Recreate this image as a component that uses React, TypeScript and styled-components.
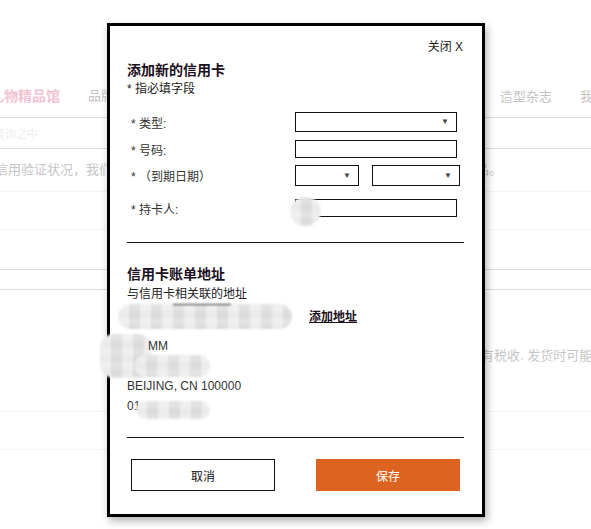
import React from "react";
import styled, { createGlobalStyle } from "styled-components";

const GlobalStyle = createGlobalStyle`
  html, body {
    margin: 0;
    padding: 0;
    background: #fff;
    overflow: hidden;
  }
  body {
    font-family: "Liberation Sans", "Noto Sans CJK SC", sans-serif;
  }
  * {
    box-sizing: border-box;
  }
`;

const navLeft = ["礼物精品馆", "品牌", "男士", "女士"];
const navRight = ["儿童", "造型杂志", "我的"];

const backdropRows = [
  { h: 31, line: "strong", text: "查询之中", pad: -6, muted: true },
  {
    h: 43,
    line: "faint",
    text: "信用验证状况，我们将无法处理您的订单，请更换其他付款方式后再次提交购买的商品。",
    pad: -5,
    top: -4,
  },
  { h: 38, line: "faint" },
  { h: 40, line: "strong" },
  { h: 20, line: "strong" },
  { h: 122, line: "faint", text: "有税收. 发货时可能需要额外的处理时间", pad: 481, top: 8 },
  { h: 38, line: "faint" },
] as const;

const addressLines = ["MM", "", "BEIJING, CN 100000", "01"];

export default function App() {
  return (
    <>
      <GlobalStyle />
      <Page>
        <Nav>
          <NavGroup>
            {navLeft.map((item, i) => (
              <NavItem key={item} $brand={i === 0}>
                {item}
              </NavItem>
            ))}
          </NavGroup>
          <NavGroup>
            {navRight.map((item) => (
              <NavItem key={item}>{item}</NavItem>
            ))}
          </NavGroup>
        </Nav>
        {backdropRows.map((row, i) => (
          <BgRow key={i} $h={row.h} $line={row.line}>
            {"text" in row && (
              <BgText
                $pad={row.pad}
                $shift={"top" in row ? row.top : 0}
                $muted={"muted" in row}
              >
                {row.text}
              </BgText>
            )}
          </BgRow>
        ))}

        <Modal>
          <CloseRow>关闭 X</CloseRow>
          <Title>添加新的信用卡</Title>
          <Note>* 指必填字段</Note>

          <Form>
            <FormRow $top={0}>
              <Label>* 类型:</Label>
              <SelectBox $w={162} $h={20}>
                <Arrow>▼</Arrow>
              </SelectBox>
            </FormRow>
            <FormRow $top={8}>
              <Label>* 号码:</Label>
              <TextBox $w={162} $h={18} />
            </FormRow>
            <FormRow $top={7}>
              <Label>* （到期日期）</Label>
              <DateFields>
                <SelectBox $w={64} $h={21}>
                  <Arrow>▼</Arrow>
                </SelectBox>
                <SelectBox $w={88} $h={21}>
                  <Arrow>▼</Arrow>
                </SelectBox>
              </DateFields>
            </FormRow>
            <FormRow $top={13}>
              <Label>* 持卡人:</Label>
              <FieldWrap>
                <TextBox $w={162} $h={18} />
                <Redact $x={-5} $y={-2} $w={31} $h={29} $round />
              </FieldWrap>
            </FormRow>
          </Form>

          <Divider $top={25} />

          <Title $top={22}>信用卡账单地址</Title>
          <SubNote>与信用卡相关联的地址</SubNote>

          <AddressRow>
            <AddressPick>
              <Redact $x={-9} $y={0} $w={174} $h={25} $edge />
            </AddressPick>
            <AddLink>添加地址</AddLink>
          </AddressRow>

          <AddressBlock>
            <Redact $x={-27} $y={-2} $w={52} $h={44} />
            <Redact $x={8} $y={19} $w={75} $h={22} />
            {addressLines.map((line, i) => (
              <AddressLine key={i} $indent={i === 0 ? 21 : 0}>
                {line || "\u00a0"}
              </AddressLine>
            ))}
            <Redact $x={9} $y={65} $w={74} $h={18} />
          </AddressBlock>

          <Divider $top={21} />

          <Buttons>
            <CancelButton>取消</CancelButton>
            <SaveButton>保存</SaveButton>
          </Buttons>
        </Modal>
      </Page>
    </>
  );
}

const Page = styled.div`
  position: relative;
  width: 591px;
  height: 529px;
  overflow: hidden;
  font-family: "Liberation Sans", "Noto Sans CJK SC", sans-serif;
`;

const Nav = styled.nav`
  display: flex;
  justify-content: space-between;
  align-items: flex-end;
  width: 616px;
  height: 118px;
  margin-left: -10px;
  padding-bottom: 12px;
  border-bottom: 1px solid #dcdcdc;
  font-size: 13px;
`;

const NavGroup = styled.div`
  display: flex;
  gap: 28px;
`;

const NavItem = styled.span<{ $brand?: boolean }>`
  white-space: nowrap;
  font-size: ${({ $brand }) => ($brand ? 14 : 13)}px;
  color: ${({ $brand }) => ($brand ? "#f2c3d4" : "#c4c4c4")};
  font-weight: ${({ $brand }) => ($brand ? 700 : 400)};
`;

const BgRow = styled.div<{ $h: number; $line: string }>`
  display: flex;
  align-items: center;
  height: ${({ $h }) => $h}px;
  border-bottom: 1px solid
    ${({ $line }) => ($line === "strong" ? "#dcdcdc" : "#f4f4f4")};
  overflow: hidden;
`;

const BgText = styled.span<{ $pad: number; $shift: number; $muted?: boolean }>`
  margin-left: ${({ $pad }) => $pad}px;
  margin-top: ${({ $shift }) => $shift}px;
  white-space: nowrap;
  font-size: ${({ $muted }) => ($muted ? 11 : 13)}px;
  color: ${({ $muted }) => ($muted ? "#eeeeee" : "#c6c6c6")};
`;

const Modal = styled.div`
  position: absolute;
  left: 107px;
  top: 23px;
  width: 378px;
  padding: 13px 18px 23px 17px;
  background: #fff;
  border: 3px solid #000;
  box-shadow: 2px 4px 8px rgba(0, 0, 0, 0.3);
  color: #222;
  font-family: "Liberation Sans", "Noto Sans CJK SC", sans-serif;
`;

const CloseRow = styled.div`
  text-align: right;
  font-size: 12px;
  line-height: 16px;
  color: #222;
  padding-right: 1px;
`;

const Title = styled.h2<{ $top?: number }>`
  margin: ${({ $top }) => $top ?? 6}px 0 0;
  font-size: 14px;
  line-height: 18px;
  font-weight: 700;
  color: #1c1020;
`;

const Note = styled.div`
  margin-top: 2px;
  font-size: 12px;
  line-height: 16px;
`;

const SubNote = styled(Note)`
  margin-top: 3px;
`;

const Form = styled.div`
  margin-top: 15px;
  padding-left: 4px;
`;

const FormRow = styled.div<{ $top: number }>`
  display: flex;
  align-items: center;
  margin-top: ${({ $top }) => $top}px;
`;

const Label = styled.div`
  width: 164px;
  font-size: 12px;
  color: #333;
`;

const SelectBox = styled.div<{ $w: number; $h: number }>`
  display: flex;
  align-items: center;
  justify-content: flex-end;
  width: ${({ $w }) => $w}px;
  height: ${({ $h }) => $h}px;
  padding-right: 7px;
  border: 1px solid #111;
  background: #fff;
`;

const Arrow = styled.span`
  font-size: 8px;
  line-height: 1;
  color: #444;
`;

const TextBox = styled.div<{ $w: number; $h: number }>`
  width: ${({ $w }) => $w}px;
  height: ${({ $h }) => $h}px;
  border: 1px solid #111;
  background: #fff;
`;

const DateFields = styled.div`
  display: flex;
  gap: 13px;
`;

const FieldWrap = styled.div`
  position: relative;
`;

const Redact = styled.div<{
  $x: number;
  $y: number;
  $w: number;
  $h: number;
  $round?: boolean;
  $edge?: boolean;
}>`
  position: absolute;
  left: ${({ $x }) => $x}px;
  top: ${({ $y }) => $y}px;
  width: ${({ $w }) => $w}px;
  height: ${({ $h }) => $h}px;
  border-radius: ${({ $round }) => ($round ? "50%" : "14px")};
  background-color: #e2e2e2;
  background-image: linear-gradient(
      90deg,
      rgba(255, 255, 255, 0.45) 50%,
      transparent 50%
    ),
    linear-gradient(0deg, rgba(0, 0, 0, 0.03) 50%, transparent 50%);
  background-size: 22px 100%, 100% 14px;
  filter: blur(1px);

  &::before {
    content: "";
    display: ${({ $edge }) => ($edge ? "block" : "none")};
    position: absolute;
    left: 55px;
    top: 0;
    width: 58px;
    height: 1px;
    background: #222;
  }
`;

const Divider = styled.div<{ $top: number }>`
  height: 1px;
  margin-top: ${({ $top }) => $top}px;
  background: #111;
`;

const AddressRow = styled.div`
  display: flex;
  align-items: center;
  gap: 17px;
  height: 25px;
  margin-top: 2px;
`;

const AddressPick = styled.div`
  position: relative;
  width: 165px;
  height: 25px;
`;

const AddLink = styled.a`
  margin-top: -3px;
  font-size: 12px;
  font-weight: 700;
  color: #1c1020;
  text-decoration: underline;
  cursor: pointer;
`;

const AddressBlock = styled.div`
  position: relative;
  margin-top: 7px;
`;

const AddressLine = styled.div<{ $indent: number }>`
  position: relative;
  padding-left: ${({ $indent }) => $indent}px;
  font-size: 12px;
  line-height: 20px;
  color: #333;
`;

const Buttons = styled.div`
  display: flex;
  justify-content: space-between;
  margin-top: 21px;
  padding: 0 4px;
`;

const BaseButton = styled.button`
  width: 144px;
  height: 32px;
  font-family: "Liberation Sans", "Noto Sans CJK SC", sans-serif;
  font-size: 12px;
  cursor: pointer;
`;

const CancelButton = styled(BaseButton)`
  background: #fff;
  border: 1px solid #111;
  color: #111;
`;

const SaveButton = styled(BaseButton)`
  background: #dd6420;
  border: none;
  color: #fff;
`;
